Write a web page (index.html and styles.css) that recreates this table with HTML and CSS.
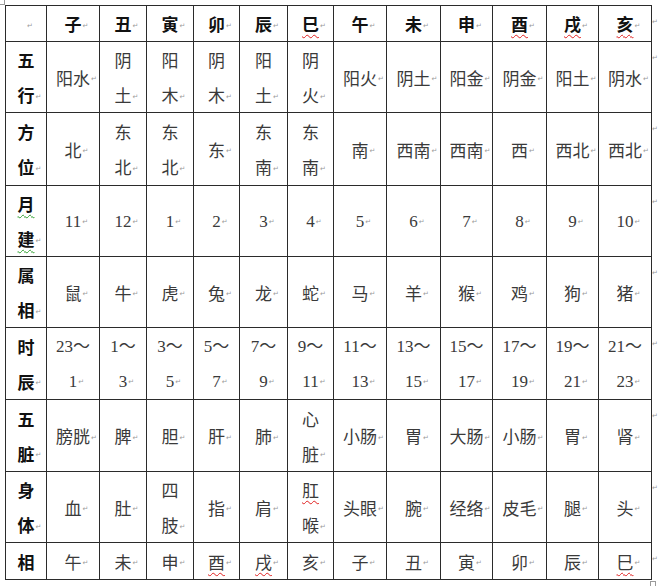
FILE: index.html
```html
<!DOCTYPE html>
<html lang="zh-CN">
<head>
<meta charset="utf-8">
<title>地支表</title>
<link rel="stylesheet" href="styles.css">
</head>
<body>
<div class="page">
<span class="handle"></span>
<table class="zhi">
<colgroup>
<col class="w41"><col class="w53"><col class="w47"><col class="w47"><col class="w46"><col class="w48"><col class="w46"><col class="w53"><col class="w54"><col class="w52"><col class="w54"><col class="w52"><col class="w53"><col class="wend">
</colgroup>
<tr class="ra">
<td><i class="pm">↵</i></td>
<th>子<i class="pm">↵</i></th><th>丑<i class="pm">↵</i></th><th>寅<i class="pm">↵</i></th><th>卯<i class="pm">↵</i></th><th>辰<i class="pm">↵</i></th><th><u class="sp">巳</u><i class="pm">↵</i></th>
<th>午<i class="pm">↵</i></th><th>未<i class="pm">↵</i></th><th>申<i class="pm">↵</i></th><th><u class="sp">酉</u><i class="pm">↵</i></th><th><u class="sp">戌</u><i class="pm">↵</i></th><th><u class="sp">亥</u><i class="pm">↵</i></th>
<td class="end"><i class="pm">↵</i></td>
</tr>
<tr class="rb">
<th class="lab">五<br>行<i class="pm">↵</i></th>
<td>阳水<i class="pm">↵</i></td><td>阴<br>土<i class="pm">↵</i></td><td>阳<br>木<i class="pm">↵</i></td><td>阴<br>木<i class="pm">↵</i></td><td>阳<br>土<i class="pm">↵</i></td><td>阴<br>火<i class="pm">↵</i></td>
<td>阳火<i class="pm">↵</i></td><td>阴土<i class="pm">↵</i></td><td>阳金<i class="pm">↵</i></td><td>阴金<i class="pm">↵</i></td><td>阳土<i class="pm">↵</i></td><td>阴水<i class="pm">↵</i></td>
<td class="end"><i class="pm">↵</i></td>
</tr>
<tr class="rc">
<th class="lab">方<br>位<i class="pm">↵</i></th>
<td>北<i class="pm">↵</i></td><td>东<br>北<i class="pm">↵</i></td><td>东<br>北<i class="pm">↵</i></td><td>东<i class="pm">↵</i></td><td>东<br>南<i class="pm">↵</i></td><td>东<br>南<i class="pm">↵</i></td>
<td>南<i class="pm">↵</i></td><td>西南<i class="pm">↵</i></td><td>西南<i class="pm">↵</i></td><td>西<i class="pm">↵</i></td><td>西北<i class="pm">↵</i></td><td>西北<i class="pm">↵</i></td>
<td class="end"><i class="pm">↵</i></td>
</tr>
<tr class="rb">
<th class="lab"><u class="gr">月</u><br><u class="gr">建</u><i class="pm">↵</i></th>
<td class="num">11<i class="pm">↵</i></td><td class="num">12<i class="pm">↵</i></td><td class="num">1<i class="pm">↵</i></td><td class="num">2<i class="pm">↵</i></td><td class="num">3<i class="pm">↵</i></td><td class="num">4<i class="pm">↵</i></td>
<td class="num">5<i class="pm">↵</i></td><td class="num">6<i class="pm">↵</i></td><td class="num">7<i class="pm">↵</i></td><td class="num">8<i class="pm">↵</i></td><td class="num">9<i class="pm">↵</i></td><td class="num">10<i class="pm">↵</i></td>
<td class="end"><i class="pm">↵</i></td>
</tr>
<tr class="rb">
<th class="lab">属<br>相<i class="pm">↵</i></th>
<td>鼠<i class="pm">↵</i></td><td>牛<i class="pm">↵</i></td><td>虎<i class="pm">↵</i></td><td>兔<i class="pm">↵</i></td><td>龙<i class="pm">↵</i></td><td>蛇<i class="pm">↵</i></td>
<td>马<i class="pm">↵</i></td><td>羊<i class="pm">↵</i></td><td>猴<i class="pm">↵</i></td><td>鸡<i class="pm">↵</i></td><td>狗<i class="pm">↵</i></td><td>猪<i class="pm">↵</i></td>
<td class="end"><i class="pm">↵</i></td>
</tr>
<tr class="rd">
<th class="lab">时<br>辰<i class="pm">↵</i></th>
<td class="num">23～<br>1<i class="pm">↵</i></td><td class="num">1～<br>3<i class="pm">↵</i></td><td class="num">3～<br>5<i class="pm">↵</i></td><td class="num">5～<br>7<i class="pm">↵</i></td><td class="num">7～<br>9<i class="pm">↵</i></td><td class="num">9～<br>11<i class="pm">↵</i></td>
<td class="num">11～<br>13<i class="pm">↵</i></td><td class="num">13～<br>15<i class="pm">↵</i></td><td class="num">15～<br>17<i class="pm">↵</i></td><td class="num">17～<br>19<i class="pm">↵</i></td><td class="num">19～<br>21<i class="pm">↵</i></td><td class="num">21～<br>23<i class="pm">↵</i></td>
<td class="end"><i class="pm">↵</i></td>
</tr>
<tr class="rd">
<th class="lab">五<br>脏<i class="pm">↵</i></th>
<td>膀胱<i class="pm">↵</i></td><td>脾<i class="pm">↵</i></td><td>胆<i class="pm">↵</i></td><td>肝<i class="pm">↵</i></td><td>肺<i class="pm">↵</i></td><td>心<br>脏<i class="pm">↵</i></td>
<td>小肠<i class="pm">↵</i></td><td>胃<i class="pm">↵</i></td><td>大肠<i class="pm">↵</i></td><td>小肠<i class="pm">↵</i></td><td>胃<i class="pm">↵</i></td><td>肾<i class="pm">↵</i></td>
<td class="end"><i class="pm">↵</i></td>
</tr>
<tr class="rb">
<th class="lab">身<br>体<i class="pm">↵</i></th>
<td>血<i class="pm">↵</i></td><td>肚<i class="pm">↵</i></td><td>四<br>肢<i class="pm">↵</i></td><td>指<i class="pm">↵</i></td><td>肩<i class="pm">↵</i></td><td><u class="sp">肛</u><br>喉<i class="pm">↵</i></td>
<td>头眼<i class="pm">↵</i></td><td>腕<i class="pm">↵</i></td><td>经络<i class="pm">↵</i></td><td>皮毛<i class="pm">↵</i></td><td>腿<i class="pm">↵</i></td><td>头<i class="pm">↵</i></td>
<td class="end"><i class="pm">↵</i></td>
</tr>
<tr class="re">
<th class="lab">相</th>
<td>午<i class="pm">↵</i></td><td>未<i class="pm">↵</i></td><td>申<i class="pm">↵</i></td><td><u class="sp">酉</u><i class="pm">↵</i></td><td><u class="sp">戌</u><i class="pm">↵</i></td><td>亥<i class="pm">↵</i></td>
<td>子<i class="pm">↵</i></td><td>丑<i class="pm">↵</i></td><td>寅<i class="pm">↵</i></td><td>卯<i class="pm">↵</i></td><td>辰<i class="pm">↵</i></td><td><u class="sp">巳</u><i class="pm">↵</i></td>
<td class="end"><i class="pm">↵</i></td>
</tr>
</table>
<span class="corner"></span>
</div>
</body>
</html>
```

FILE: styles.css
```css
html, body {
  margin: 0;
  padding: 0;
  background: #ffffff;
}

.page {
  position: relative;
  width: 658px;
  height: 586px;
  padding: 5px 0 0 5px;
  box-sizing: border-box;
}

.zhi {
  border-collapse: collapse;
  table-layout: fixed;
  width: 653px;
  font-family: "Noto Sans CJK SC", "Liberation Serif", sans-serif;
  font-size: 17px;
  line-height: 35px;
  color: #3a3a3a;
}

.w41 { width: 41px; }
.w46 { width: 46px; }
.w47 { width: 47px; }
.w48 { width: 48px; }
.w52 { width: 52px; }
.w53 { width: 53px; }
.w54 { width: 54px; }
.wend { width: 7px; }

.zhi td,
.zhi th {
  border: 1px solid #2b2b2b;
  padding: 0;
  text-align: center;
  vertical-align: middle;
  white-space: nowrap;
}

.zhi th {
  font-weight: 700;
  color: #111111;
}

.zhi td.num {
  font-family: "Liberation Serif", "Noto Sans CJK SC", serif;
  font-size: 17px;
}

.zhi td.end {
  border: none;
  text-align: left;
  vertical-align: top;
  line-height: 30px;
}

.ra { height: 36px; }
.rb { height: 71px; }
.rc { height: 73px; }
.rd { height: 72px; }
.re { height: 37px; }

.pm {
  display: inline-block;
  width: 0;
  font-style: normal;
  font-weight: 400;
  font-family: "DejaVu Sans", sans-serif;
  font-size: 7px;
  line-height: 1;
  color: #9a9a9a;
  vertical-align: middle;
  overflow: visible;
  white-space: nowrap;
  text-indent: 1px;
}

.zhi td.end .pm {
  text-indent: 0;
}

.sp {
  text-decoration: underline wavy #e02020;
  text-decoration-thickness: 1px;
  text-underline-offset: 3px;
}

.gr {
  text-decoration: underline wavy #2e9e2e;
  text-decoration-thickness: 1px;
  text-underline-offset: 3px;
}

.handle {
  position: absolute;
  left: 0;
  top: 0;
  width: 4px;
  height: 4px;
  border: 1px solid #9a9a9a;
  border-top: none;
  border-left: none;
}

.corner {
  position: absolute;
  left: 650px;
  top: 581px;
  width: 4px;
  height: 4px;
  border: 1px solid #9a9a9a;
}
```
